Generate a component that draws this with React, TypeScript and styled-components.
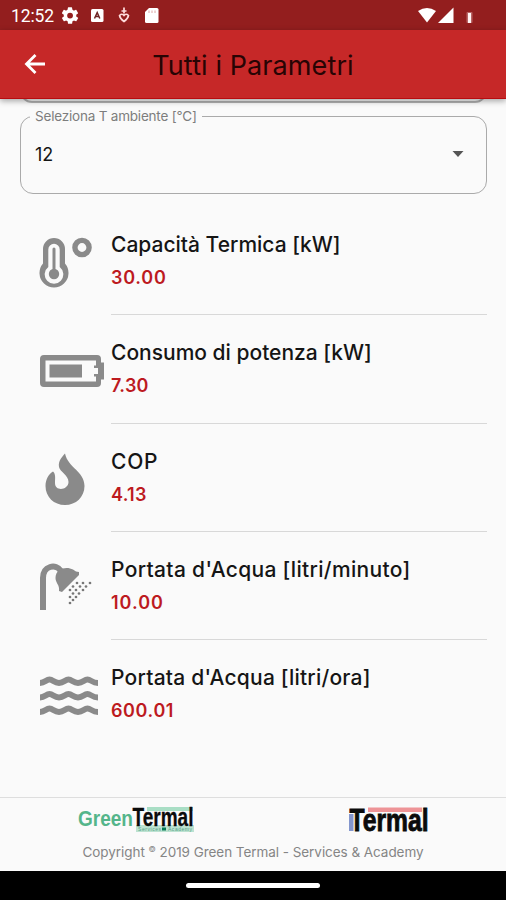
import React from 'react';
import styled, { createGlobalStyle } from 'styled-components';

const Global = createGlobalStyle`
  * { box-sizing: border-box; }
  body { margin: 0; background: #fafafa; }
`;

const Screen = styled.div`
  width: 506px;
  height: 900px;
  display: flex;
  flex-direction: column;
  overflow: hidden;
  background: #fafafa;
  font-family: Inter, Lato, sans-serif;
  color: #151515;
`;

const StatusBar = styled.div`
  height: 30px;
  flex: none;
  display: flex;
  align-items: center;
  padding: 2px 29px 0 11px;
  background: #931e1e;
  color: #fff;
`;

const Clock = styled.span`
  width: 51px;
  font: 400 17.5px/20px Roboto, sans-serif;
  letter-spacing: -0.1px;
`;

const StatusIcons = styled.div`
  display: flex;
  align-items: center;
`;

const SignalIcons = styled(StatusIcons)`
  margin-left: auto;
`;

const AppBar = styled.header`
  height: 69px;
  flex: none;
  display: grid;
  grid-template-columns: 70px 1fr 70px;
  align-items: center;
  background: #c62828;
  border-bottom: 1px solid #b80c10;
  box-shadow: 0 2px 6px rgba(0, 0, 0, 0.35);
  z-index: 1;
`;

const BackButton = styled.button`
  border: 0;
  padding: 0;
  background: none;
  display: flex;
  justify-content: center;
`;

const Title = styled.h1`
  margin: 3px 0 0;
  text-align: center;
  font-weight: 400;
  font-size: 27px;
  line-height: 32px;
  letter-spacing: 0.1px;
  color: #280404;
`;

const Content = styled.main`
  flex: 1;
  min-height: 0;
  display: flex;
  flex-direction: column;
  padding: 0 19px 0 20px;
`;

const FieldEnd = styled.div`
  height: 4px;
  flex: none;
  overflow: hidden;
  display: flex;
  align-items: flex-end;

  &::after {
    content: '';
    flex: 1;
    height: 60px;
    border: 2px solid #b2b2b2;
    border-radius: 12px;
  }
`;

const Field = styled.fieldset`
  height: 86px;
  flex: none;
  min-width: 0;
  margin: 5px 0 0;
  padding: 0 22px 0 9px;
  border: 1.5px solid #aaa;
  border-radius: 13px;
`;

const Legend = styled.legend`
  padding: 0 5px;
  font-size: 13.5px;
  line-height: 16px;
  letter-spacing: -0.2px;
  color: #7d7d7d;
`;

const FieldValue = styled.div`
  display: flex;
  justify-content: space-between;
  align-items: center;
  height: 24px;
  margin-top: 18px;
  padding-left: 5px;
  font-size: 18px;
`;

const List = styled.div`
  margin-top: 13px;
`;

const Row = styled.div`
  display: grid;
  grid-template-columns: 91px 1fr;
  height: 108.3px;
`;

const IconCell = styled.div`
  padding: 29px 0 0 19px;
`;

const RowText = styled.div<{ $last?: boolean }>`
  padding-top: 24px;
  border-bottom: 1.5px solid ${(p) => (p.$last ? 'transparent' : '#d8d8d8')};
  white-space: nowrap;
`;

const Name = styled.div<{ $spacing: number }>`
  font-size: 21px;
  font-weight: 500;
  line-height: 28px;
  letter-spacing: ${(p) => p.$spacing}px;
`;

const Value = styled.div<{ $spacing: number }>`
  margin-top: 6px;
  font-size: 18px;
  font-weight: 600;
  line-height: 26px;
  letter-spacing: ${(p) => p.$spacing}px;
  color: #bd1a1f;
`;

const Footer = styled.footer`
  height: 74px;
  flex: none;
  border-top: 1px solid #dedede;
  padding-top: 7px;
`;

const Logos = styled.div`
  display: flex;
  justify-content: space-between;
  padding: 0 74px 0 78px;
  height: 30px;

  svg { overflow: visible; }
`;

const Copyright = styled.div`
  margin-top: 8px;
  text-align: center;
  font-size: 13.5px;
  line-height: 18px;
  letter-spacing: -0.05px;
  color: #858585;
  white-space: nowrap;

  sup { font-size: 8px; line-height: 0; }
`;

const NavBar = styled.nav`
  height: 29px;
  flex: none;
  display: flex;
  justify-content: center;
  align-items: center;
  background: #000;
`;

const Handle = styled.div`
  width: 134px;
  height: 5px;
  border-radius: 3px;
  background: #fff;
`;

const GREY = '#8a8a8a';

const Thermometer = () => (
  <svg width="66" height="56" viewBox="0 0 66 56" fill="none">
    <path d="M4 27.500V13A11 11 0 0 1 26 13V27.500A14.500 14.500 0 1 1 4 27.500Z" fill={GREY} />
    <path d="M9.300 31V13.500A5.700 5.700 0 0 1 20.700 13.500V31A9.300 9.300 0 1 1 9.300 31Z" fill="#fafafa" />
    <path d="M15 13V38" stroke={GREY} strokeWidth="3" strokeLinecap="round" />
    <circle cx="15" cy="38" r="5.200" fill={GREY} />
    <circle cx="43" cy="11.500" r="7.100" stroke={GREY} strokeWidth="5.400" />
  </svg>
);

const Battery = () => (
  <svg width="66" height="56" viewBox="0 0 66 56" fill={GREY}>
    <path fillRule="evenodd" d="M5 11H58Q62 11 62 15V18.500H65V35.500H62V39Q62 43 58 43H5Q1 43 1 39V15Q1 11 5 11ZM6.500 16.500V37.500H57V32.500H55V30H59V24H55V21.500H57V16.500Z" />
    <path d="M10.500 20.500H43V33.500H10.500Z" />
  </svg>
);

const Flame = () => (
  <svg width="66" height="56" viewBox="0 0 66 56">
    <path d="M26 0.500C23 4 19 8 20 14C21 19 29.500 22 29.500 29C29.500 37 16 39 16 30C16 26 17 21 14 18.500C10 21 6.500 26 6.500 33C6.500 44 15 52 26 52C37 52 45.500 44 45.500 33C45.500 18 29 15 26 0.500Z" fill={GREY} />
  </svg>
);

const drops = [
  [38, 22], [44, 22], [51, 22], [34, 25.5], [41, 25.5], [47, 25.5],
  [31, 29], [37, 29], [44, 29], [34, 32.5], [40, 32.5],
  [31, 36], [37, 36], [34, 39], [31, 42],
];

const Shower = () => (
  <svg width="66" height="56" viewBox="0 0 66 56">
    <path d="M4 46V17C4 5 17 2 22 10" fill="none" stroke={GREY} strokeWidth="6" strokeLinecap="square" />
    <path d="M16.500 17C16.500 7 28 5 34 8.500Q37 11 40 11V14L23 31L20 30C21 24 16.500 22 16.500 17Z" fill={GREY} />
    {drops.map(([x, y]) => (
      <circle key={`${x}-${y}`} cx={x} cy={y} r="1.35" fill="#777" />
    ))}
  </svg>
);

const Waves = () => (
  <svg width="66" height="56" viewBox="0 0 66 56" fill="none" stroke={GREY} strokeWidth="5.800" strokeLinejoin="round">
    {[12.5, 27, 41.500].map((y) => (
      <path key={y} d={`M1 ${y + 1.5}C6 ${y + 1.5} 7 ${y - 2} 10.5 ${y - 2}C14 ${y - 2} 15 ${y + 1.5} 20 ${y + 1.5}S26 ${y - 2} 29.5 ${y - 2}S34 ${y + 1.5} 39 ${y + 1.5}S45 ${y - 2} 48.5 ${y - 2}S53 ${y + 1.5} 59 ${y + 1.5}`} />
    ))}
  </svg>
);

const parameters = [
  { name: 'Capacità Termica [kW]', value: '30.00', icon: <Thermometer />, ns: 0, vs: 0.75 },
  { name: 'Consumo di potenza [kW]', value: '7.30', icon: <Battery />, ns: 0, vs: 0.25 },
  { name: 'COP', value: '4.13', icon: <Flame />, ns: 0.8, vs: 0.3 },
  { name: "Portata d'Acqua [litri/minuto]", value: '10.00', icon: <Shower />, ns: 0.33, vs: 1 },
  { name: "Portata d'Acqua [litri/ora]", value: '600.01', icon: <Waves />, ns: 0.22, vs: 0.6 },
];

const GreenTermalLogo = () => (
  <svg width="117" height="28" viewBox="0 0 117 28" fontFamily="Liberation Sans, sans-serif" fontWeight="700">
    <rect x="69" y="2" width="46" height="4" fill="#a9dec5" />
    <rect x="58" y="20" width="58" height="7" fill="#bce2d1" />
    <text x="0" y="21" fontSize="22.500" fill="#54b58a" textLength="55" lengthAdjust="spacingAndGlyphs">Green</text>
    <text x="54.500" y="20.500" fontSize="26" fill="#0b0b0b" stroke="#0b0b0b" strokeWidth="0.300" textLength="61" lengthAdjust="spacingAndGlyphs">Termal</text>
    <text x="60" y="26" fontSize="5" fontWeight="400" fill="#55a588" textLength="23">Services</text>
    <rect x="84" y="22.500" width="4" height="3" fill="#087a55" />
    <text x="90" y="26" fontSize="5" fontWeight="400" fill="#55a588" textLength="24">Academy</text>
  </svg>
);

const TermalLogo = () => (
  <svg width="84" height="28" viewBox="0 0 84 28" fontFamily="Liberation Sans, sans-serif" fontWeight="700">
    <rect x="20" y="2.500" width="54" height="4.500" fill="#ee9497" />
    <rect x="1" y="9" width="4.500" height="17" fill="#8396cd" />
    <text x="1.500" y="26" fontSize="32" fill="#0b0b0b" stroke="#0b0b0b" strokeWidth="0.900" textLength="79" lengthAdjust="spacingAndGlyphs">Termal</text>
  </svg>
);

export default function App() {
  return (
    <Screen>
      <Global />
      <StatusBar>
        <Clock>12:52</Clock>
        <StatusIcons>
          <svg width="98" height="18" viewBox="0 0 98 18" fill="#fff">
            <path transform="translate(-1.9 -1.4) scale(.83)" d="M19.4 13a7.5 7.5 0 0 0 0-2l2.1-1.6a.5.5 0 0 0 .1-.6l-2-3.5a.5.5 0 0 0-.6-.2l-2.500 1a7.300 7.300 0 0 0-1.700-1l-.4-2.600a.5.5 0 0 0-.5-.4h-4a.5.5 0 0 0-.5.4L9 5.100a7.300 7.300 0 0 0-1.700 1l-2.500-1a.5.5 0 0 0-.6.2l-2 3.500a.5.5 0 0 0 .1.6L4.500 11a7.500 7.500 0 0 0 0 2l-2.100 1.600a.5.5 0 0 0-.1.6l2 3.500a.5.5 0 0 0 .6.2l2.500-1a7.300 7.300 0 0 0 1.700 1l.4 2.600a.5.5 0 0 0 .5.4h4a.5.5 0 0 0 .5-.4l.4-2.600a7.300 7.300 0 0 0 1.700-1l2.500 1a.5.5 0 0 0 .6-.2l2-3.500a.5.5 0 0 0-.1-.6zM12 15.500a3.500 3.500 0 1 1 0-7 3.500 3.500 0 0 1 0 7z" />
            <rect x="29" y="2" width="12.500" height="13" rx="1.500" />
            <path d="M32.500 11.500L35.200 5.500l2.600 6M33.500 9.500h3.500" fill="none" stroke="#6d2222" strokeWidth="1.500" />
            <path d="M62 0.500v6M59.500 4h5" fill="none" stroke="#ffdcdc" strokeWidth="1.700" />
            <path d="M57.500 8.500Q60 6 62 8.500Q64 6 66.500 8.500Q66 11.500 62 14.500Q58 11.500 57.500 8.500Z" fill="none" stroke="#ffdcdc" strokeWidth="1.600" />
            <path d="M87 1H95Q96.500 1 96.500 2.500V14.500Q96.500 16 95 16H84.500Q83 16 83 14.500V5Z" />
            <path d="M87 3.500v2.500M90 3.500v2.500M93 3.500v2.500" stroke="#dca6a6" />
          </svg>
        </StatusIcons>
        <SignalIcons>
          <svg width="60" height="18" viewBox="0 0 60 18" fill="#fff">
            <path d="M1 4Q10 -2 19 4L10 15.500Z" />
            <path d="M21 16L36.500 0.500V16Z" />
            <rect x="49.500" y="5" width="6" height="11" rx="1" fill="#b96565" />
            <rect x="51" y="6" width="3" height="10" fill="#fff3f3" />
          </svg>
        </SignalIcons>
      </StatusBar>
      <AppBar>
        <BackButton aria-label="Indietro">
          <svg width="22" height="22" viewBox="0 0 22 22" fill="none" stroke="#fff" strokeWidth="2.800">
            <path d="M21 11H3M11.500 2L2.500 11L11.500 20" />
          </svg>
        </BackButton>
        <Title>Tutti i Parametri</Title>
      </AppBar>
      <Content>
        <FieldEnd />
        <Field>
          <Legend>Seleziona T ambiente [°C]</Legend>
          <FieldValue>
            <span>12</span>
            <svg width="12" height="6" viewBox="0 0 12 6" fill="#555"><path d="M0.500 0H11.500L6 6Z" /></svg>
          </FieldValue>
        </Field>
        <List>
          {parameters.map((p, i) => (
            <Row key={p.name}>
              <IconCell>{p.icon}</IconCell>
              <RowText $last={i === parameters.length - 1}>
                <Name $spacing={p.ns}>{p.name}</Name>
                <Value $spacing={p.vs}>{p.value}</Value>
              </RowText>
            </Row>
          ))}
        </List>
      </Content>
      <Footer>
        <Logos>
          <GreenTermalLogo />
          <TermalLogo />
        </Logos>
        <Copyright>Copyright <sup>©</sup> 2019 Green Termal - Services &amp; Academy</Copyright>
      </Footer>
      <NavBar><Handle /></NavBar>
    </Screen>
  );
}
